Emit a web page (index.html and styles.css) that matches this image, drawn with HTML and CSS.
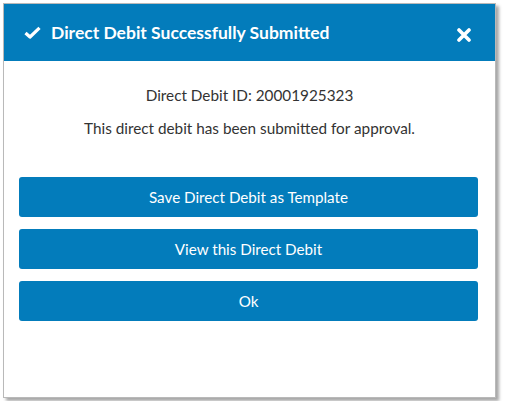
FILE: index.html
```html
<!DOCTYPE html>
<html lang="en">
<head>
    <meta charset="UTF-8">
    <meta name="viewport" content="width=device-width, initial-scale=1.0">
    <title>Direct Debit Submitted</title>
    <link rel="stylesheet" href="styles.css">
</head>
<body>
    <div class="dialog">
        <div class="dialog-header">
            <svg class="check" width="17" height="13" viewBox="0 0 17 13">
                <path d="M1.5 7 L6 11 L15.5 1.8" fill="none" stroke="#fff" stroke-width="3.2" stroke-linejoin="round"/>
            </svg>
            <h1>Direct Debit Successfully Submitted</h1>
            <svg class="close" width="14" height="14" viewBox="0 0 14 14">
                <path d="M2 2 L12 12 M12 2 L2 12" stroke="#fff" stroke-width="3.6" stroke-linecap="round"/>
            </svg>
        </div>
        <div class="dialog-body">
            <p>Direct Debit ID: 20001925323</p>
            <p>This direct debit has been submitted for approval.</p>
        </div>
        <div class="actions">
            <button>Save Direct Debit as Template</button>
            <button>View this Direct Debit</button>
            <button>Ok</button>
        </div>
    </div>
</body>
</html>
```

FILE: styles.css
```css
body {
    margin: 0;
    padding: 3px;
    font-family: Lato, "Open Sans", sans-serif;
    background: #fff;
}
.dialog {
    width: 491px;
    height: 393px;
    border: 1px solid #b9b9b9;
    background: #fff;
    box-shadow: 3px 3px 3px rgba(0, 0, 0, 0.35);
}
.dialog-header {
    display: flex;
    align-items: center;
    height: 57px;
    padding: 0 24px 0 20px;
    background: #037cbb;
    color: #fff;
}
.dialog-header h1 {
    flex: 1;
    margin: 0 0 0 10px;
    font-size: 17.5px;
    font-weight: bold;
}
.check {
    margin-top: -1px;
}
.close {
    margin-top: 4px;
}
.dialog-body {
    padding-top: 25px;
    text-align: center;
    color: #333;
    font-size: 15.3px;
    line-height: 18px;
}
.dialog-body p {
    margin: 0 0 15px;
}
.actions {
    display: flex;
    flex-direction: column;
    gap: 12px;
    padding: 25px 17px 0 15px;
}
button {
    height: 40px;
    border: none;
    border-radius: 3px;
    background: #037cbb;
    color: #fff;
    font-family: Lato, "Open Sans", sans-serif;
    font-size: 15.2px;
}
```
